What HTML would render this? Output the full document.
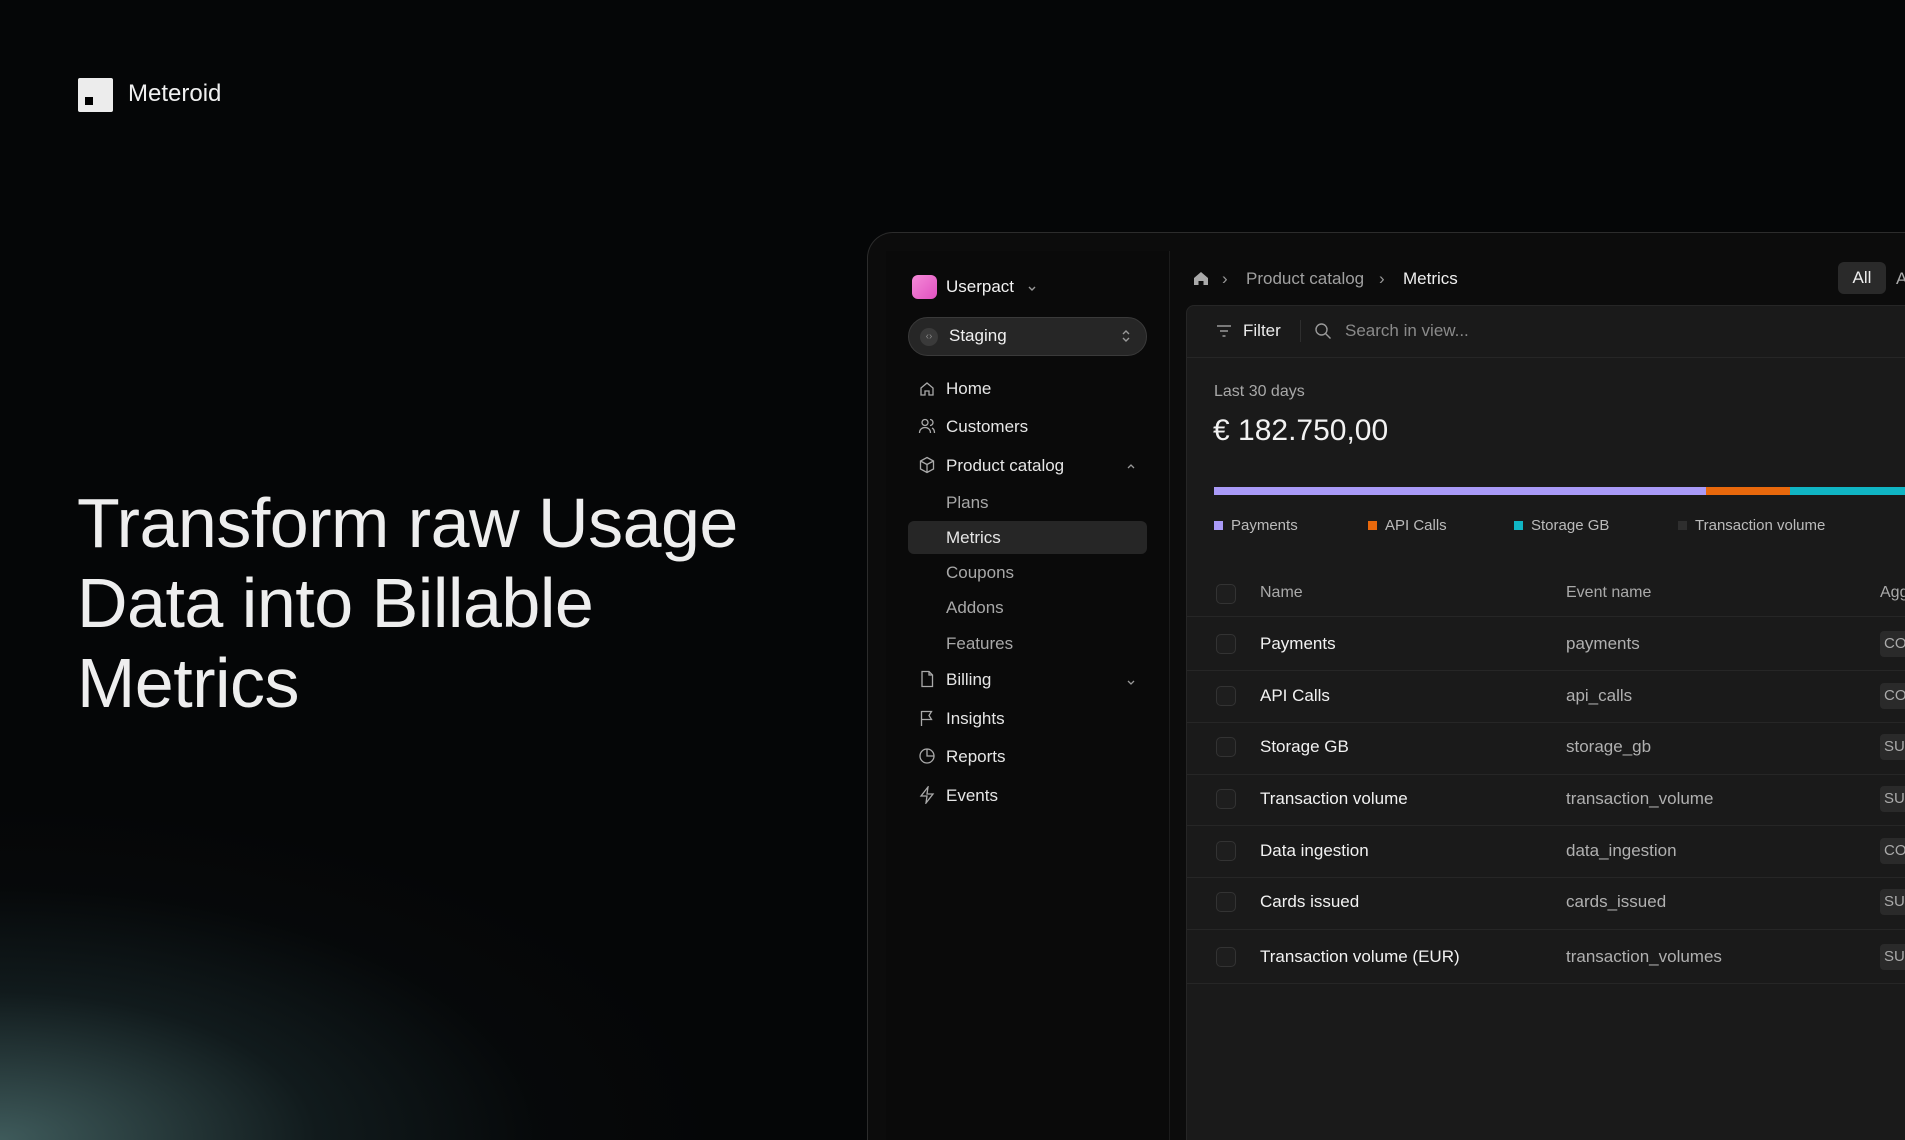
<!DOCTYPE html>
<html><head><meta charset="utf-8"><style>
*{box-sizing:border-box;margin:0;padding:0}
html,body{width:1905px;height:1140px;overflow:hidden;background:#050607}
body{font-family:"Liberation Sans",sans-serif;color:#eee}
#w{position:relative;width:1905px;height:1140px;overflow:hidden;background:#050607}
.glow{position:absolute;left:0;top:740px;width:1000px;height:400px;background:radial-gradient(ellipse 900px 420px at 0% 100%,rgba(110,160,160,0.55),rgba(60,100,105,0.22) 35%,rgba(20,40,45,0.08) 60%,rgba(0,0,0,0) 80%)}
.abs{position:absolute}
.logo{left:78px;top:78px;width:35px;height:34px;background:#ececec;border-radius:2px}
.logo i{position:absolute;left:7px;top:19px;width:8px;height:8px;background:#000}
.brand{left:128px;top:80px;font-size:24px;color:#f0f0f0}
h1{position:absolute;left:77px;top:483px;font-size:70px;font-weight:400;line-height:80px;color:#eeeeee;letter-spacing:-0.5px}
.frame{left:867px;top:232px;width:1100px;height:908px;border:1px solid #2c2c2c;border-bottom:none;border-radius:26px 26px 0 0;background:#0c0c0c}
.side{left:886px;top:251px;width:284px;height:889px;background:#0a0a0a;border-right:1px solid #1c1c1c}
.main{left:1186px;top:305px;width:719px;height:835px;background:#1a1a1a;border:1px solid #262626;border-right:none;border-bottom:none;border-radius:8px 0 0 0}
.t{position:absolute;font-size:17px;white-space:nowrap}
.nav{color:#e6e6e6}
.sub{color:#a8a8a8}
.ico{position:absolute;width:18px;height:18px}
.row{position:absolute;left:1187px;width:718px;height:1px;background:#262626}
.cb{position:absolute;left:1216px;width:20px;height:20px;border:1.5px solid #333;border-radius:5px;background:#1e1e1e}
.tag{position:absolute;left:1880px;width:25px;height:26px;background:#2a2a2a;border-radius:4px 0 0 4px;color:#aaa;font-size:15px;padding:4px 4px;overflow:hidden}
</style></head><body><div id="w">
<div class="glow"></div>
<div class="abs logo"><i></i></div>
<div class="abs brand">Meteroid</div>
<h1>Transform raw Usage<br>Data into Billable<br>Metrics</h1>

<div class="abs frame"></div>
<div class="abs side"></div>
<div class="abs" style="left:912px;top:275px;width:25px;height:24px;border-radius:6px;background:linear-gradient(135deg,#f58ad8,#e050c0)"></div>
<div class="t nav" style="left:946px;top:277px;color:#f2f2f2">Userpact</div>
<svg class="ico" style="left:1025px;top:279px;width:14px" viewBox="0 0 14 14"><path d="M4 6l3 3 3-3" stroke="#999" fill="none" stroke-width="1.4"/></svg>
<div class="abs" style="left:908px;top:317px;width:239px;height:39px;border-radius:20px;background:#262626;border:1px solid #3a3a3a"></div>
<div class="abs" style="left:920px;top:328px;width:18px;height:18px;border-radius:9px;background:#3a3a3a;color:#888;font-size:10px;text-align:center;line-height:18px">‹›</div>
<div class="t nav" style="left:949px;top:326px;color:#f0f0f0">Staging</div>
<svg class="ico" style="left:1117px;top:327px" viewBox="0 0 18 18"><path d="M6 7l3-3 3 3M6 11l3 3 3-3" stroke="#999" fill="none" stroke-width="1.4"/></svg>

<svg class="ico" style="left:918px;top:380px" viewBox="0 0 18 18"><path d="M3 8l6-5 6 5v7H11v-4H7v4H3z" stroke="#aaa" fill="none" stroke-width="1.3"/></svg>
<div class="t nav" style="left:946px;top:379px">Home</div>
<svg class="ico" style="left:918px;top:417px" viewBox="0 0 18 18"><circle cx="7" cy="5.5" r="3" stroke="#aaa" fill="none" stroke-width="1.3"/><path d="M1.5 16c0-3.5 2.5-5.5 5.5-5.5s5.5 2 5.5 5.5M12 2.5a3 3 0 010 6M14 11c2 1 2.5 3 2.5 5" stroke="#aaa" fill="none" stroke-width="1.3"/></svg>
<div class="t nav" style="left:946px;top:417px">Customers</div>
<svg class="ico" style="left:918px;top:456px" viewBox="0 0 18 18"><path d="M9 1.5l6.5 3.5v8L9 16.5 2.5 13V5zM2.5 5L9 8.5 15.5 5M9 8.5v8" stroke="#aaa" fill="none" stroke-width="1.3"/></svg>
<div class="t nav" style="left:946px;top:456px">Product catalog</div>
<svg class="ico" style="left:1124px;top:458px;width:14px" viewBox="0 0 14 14"><path d="M4 8l3-3 3 3" stroke="#999" fill="none" stroke-width="1.3"/></svg>
<div class="t sub" style="left:946px;top:493px">Plans</div>
<div class="abs" style="left:908px;top:521px;width:239px;height:33px;border-radius:6px;background:#262626"></div>
<div class="t nav" style="left:946px;top:528px">Metrics</div>
<div class="t sub" style="left:946px;top:563px">Coupons</div>
<div class="t sub" style="left:946px;top:598px">Addons</div>
<div class="t sub" style="left:946px;top:634px">Features</div>
<svg class="ico" style="left:918px;top:670px" viewBox="0 0 18 18"><path d="M4 1.5h7l3.5 3.5v11.5H4zM11 1.5V5h3.5" stroke="#aaa" fill="none" stroke-width="1.3"/></svg>
<div class="t nav" style="left:946px;top:670px">Billing</div>
<svg class="ico" style="left:1124px;top:673px;width:14px" viewBox="0 0 14 14"><path d="M4 6l3 3 3-3" stroke="#999" fill="none" stroke-width="1.3"/></svg>
<svg class="ico" style="left:918px;top:709px" viewBox="0 0 18 18"><path d="M3.5 17V2M3.5 2.5h10l-2.5 4 2.5 4h-10" stroke="#aaa" fill="none" stroke-width="1.3"/></svg>
<div class="t nav" style="left:946px;top:709px">Insights</div>
<svg class="ico" style="left:918px;top:747px" viewBox="0 0 18 18"><circle cx="9" cy="9" r="7" stroke="#aaa" fill="none" stroke-width="1.3"/><path d="M9 2v7h7" stroke="#aaa" fill="none" stroke-width="1.3"/></svg>
<div class="t nav" style="left:946px;top:747px">Reports</div>
<svg class="ico" style="left:918px;top:786px" viewBox="0 0 18 18"><path d="M10 1L3 10h6l-1 7 7-9H9z" stroke="#aaa" fill="none" stroke-width="1.3"/></svg>
<div class="t nav" style="left:946px;top:786px">Events</div>

<svg class="ico" style="left:1192px;top:269px" viewBox="0 0 18 18"><path d="M2 9l7-6 7 6v7h-4.5v-4h-5v4H2z" fill="#aaa"/></svg>
<div class="t" style="left:1222px;top:269px;color:#999">›</div>
<div class="t" style="left:1246px;top:269px;color:#a0a0a0">Product catalog</div>
<div class="t" style="left:1379px;top:269px;color:#999">›</div>
<div class="t" style="left:1403px;top:269px;color:#f0f0f0">Metrics</div>
<div class="abs" style="left:1838px;top:262px;width:48px;height:32px;border-radius:6px;background:#2a2a2a;color:#eee;font-size:17px;text-align:center;line-height:32px">All</div>
<div class="t" style="left:1896px;top:269px;color:#aaa;width:9px;overflow:hidden">A</div>

<div class="abs main"></div>
<svg class="ico" style="left:1215px;top:322px" viewBox="0 0 18 18"><path d="M2 4h14M5 9h8M7.5 14h3" stroke="#999" fill="none" stroke-width="1.4"/></svg>
<div class="t" style="left:1243px;top:321px;color:#ececec">Filter</div>
<div class="abs" style="left:1300px;top:320px;width:1px;height:22px;background:#2e2e2e"></div>
<svg class="ico" style="left:1314px;top:322px" viewBox="0 0 18 18"><circle cx="7.5" cy="7.5" r="5.5" stroke="#999" fill="none" stroke-width="1.4"/><path d="M11.5 11.5l5 5" stroke="#999" stroke-width="1.4"/></svg>
<div class="t" style="left:1345px;top:321px;color:#8a8a8a">Search in view...</div>
<div class="abs" style="left:1187px;top:357px;width:718px;height:1px;background:#262626"></div>

<div class="t" style="left:1214px;top:383px;color:#a8a8a8;font-size:16px">Last 30 days</div>
<div class="t" style="left:1213px;top:414px;color:#f2f2f2;font-size:30px">€ 182.750,00</div>
<div class="abs" style="left:1214px;top:487px;width:492px;height:8px;background:#a99af7"></div>
<div class="abs" style="left:1706px;top:487px;width:84px;height:8px;background:#e8680c"></div>
<div class="abs" style="left:1790px;top:487px;width:115px;height:8px;background:#10b5c4"></div>
<div class="abs" style="left:1214px;top:521px;width:9px;height:9px;background:#a99af7"></div>
<div class="t" style="left:1231px;top:517px;color:#bbb;font-size:15px">Payments</div>
<div class="abs" style="left:1368px;top:521px;width:9px;height:9px;background:#e8680c"></div>
<div class="t" style="left:1385px;top:517px;color:#bbb;font-size:15px">API Calls</div>
<div class="abs" style="left:1514px;top:521px;width:9px;height:9px;background:#10b5c4"></div>
<div class="t" style="left:1531px;top:517px;color:#bbb;font-size:15px">Storage GB</div>
<div class="abs" style="left:1678px;top:521px;width:9px;height:9px;background:#2e2e2e"></div>
<div class="t" style="left:1695px;top:517px;color:#bbb;font-size:15px">Transaction volume</div>

<div class="cb" style="top:584px"></div>
<div class="t" style="left:1260px;top:584px;color:#aaa;font-size:16px">Name</div>
<div class="t" style="left:1566px;top:584px;color:#aaa;font-size:16px">Event name</div>
<div class="t" style="left:1880px;top:584px;color:#aaa;font-size:16px;width:25px;overflow:hidden">Agg</div>
<div class="row" style="top:616px"></div>

<div class="cb" style="top:634px"></div><div class="t" style="left:1260px;top:634px;color:#f2f2f2">Payments</div><div class="t" style="left:1566px;top:634px;color:#b0b0b0">payments</div><div class="tag" style="top:631px">CO</div>
<div class="row" style="top:670px"></div>
<div class="cb" style="top:686px"></div><div class="t" style="left:1260px;top:686px;color:#f2f2f2">API Calls</div><div class="t" style="left:1566px;top:686px;color:#b0b0b0">api_calls</div><div class="tag" style="top:683px">CO</div>
<div class="row" style="top:722px"></div>
<div class="cb" style="top:737px"></div><div class="t" style="left:1260px;top:737px;color:#f2f2f2">Storage GB</div><div class="t" style="left:1566px;top:737px;color:#b0b0b0">storage_gb</div><div class="tag" style="top:734px">SU</div>
<div class="row" style="top:774px"></div>
<div class="cb" style="top:789px"></div><div class="t" style="left:1260px;top:789px;color:#f2f2f2">Transaction volume</div><div class="t" style="left:1566px;top:789px;color:#b0b0b0">transaction_volume</div><div class="tag" style="top:786px">SU</div>
<div class="row" style="top:825px"></div>
<div class="cb" style="top:841px"></div><div class="t" style="left:1260px;top:841px;color:#f2f2f2">Data ingestion</div><div class="t" style="left:1566px;top:841px;color:#b0b0b0">data_ingestion</div><div class="tag" style="top:838px">CO</div>
<div class="row" style="top:877px"></div>
<div class="cb" style="top:892px"></div><div class="t" style="left:1260px;top:892px;color:#f2f2f2">Cards issued</div><div class="t" style="left:1566px;top:892px;color:#b0b0b0">cards_issued</div><div class="tag" style="top:889px">SU</div>
<div class="row" style="top:929px"></div>
<div class="cb" style="top:947px"></div><div class="t" style="left:1260px;top:947px;color:#f2f2f2">Transaction volume (EUR)</div><div class="t" style="left:1566px;top:947px;color:#b0b0b0">transaction_volumes</div><div class="tag" style="top:944px">SU</div>
<div class="row" style="top:983px"></div>
</div></body></html>
